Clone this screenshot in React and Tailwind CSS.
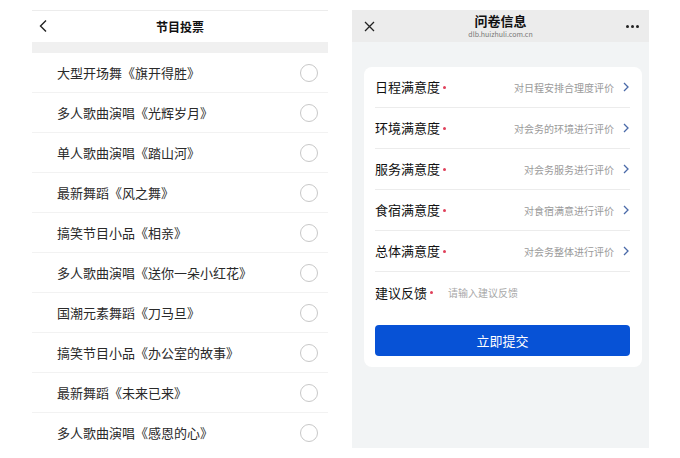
const programs = [
  "大型开场舞《旗开得胜》",
  "多人歌曲演唱《光辉岁月》",
  "单人歌曲演唱《踏山河》",
  "最新舞蹈《风之舞》",
  "搞笑节目小品《相亲》",
  "多人歌曲演唱《送你一朵小红花》",
  "国潮元素舞蹈《刀马旦》",
  "搞笑节目小品《办公室的故事》",
  "最新舞蹈《未来已来》",
  "多人歌曲演唱《感恩的心》",
];

const questions = [
  { label: "日程满意度", hint: "对日程安排合理度评价" },
  { label: "环境满意度", hint: "对会务的环境进行评价" },
  { label: "服务满意度", hint: "对会务服务进行评价" },
  { label: "食宿满意度", hint: "对食宿满意进行评价" },
  { label: "总体满意度", hint: "对会务整体进行评价" },
];

const VotePage = () => {
  return (
    <div className="w-[296px] h-[438px] flex flex-col overflow-hidden bg-white border-t border-[#ececec]">
      <div className="relative h-[31px] flex items-center justify-center shrink-0">
        <svg className="absolute left-[6px] top-[8px]" width="12" height="14" viewBox="0 0 12 14">
          <path d="M8 1.5 L2.5 7 L8 12.5" fill="none" stroke="#222" strokeWidth="1.4" />
        </svg>
        <span className="text-[12px] font-bold text-[#111]">节目投票</span>
      </div>
      <div className="h-[11px] bg-[#f0f0f0] shrink-0" />
      <ul>
        {programs.map((p) => (
          <li
            key={p}
            className="h-[40px] flex items-center justify-between pl-[25px] pr-[10px] border-b border-[#f2f2f2]"
          >
            <span className="text-[13px] text-[#2a2a2a]">{p}</span>
            <span className="w-[18px] h-[18px] rounded-full border border-[#c8c8c8]" />
          </li>
        ))}
      </ul>
    </div>
  );
};

const Chevron = () => (
  <svg width="8" height="10" viewBox="0 0 8 10" className="ml-[8px]">
    <path d="M2 1 L6 5 L2 9" fill="none" stroke="#4a6aa8" strokeWidth="1.3" />
  </svg>
);

const SurveyPage = () => {
  return (
    <div className="w-[297px] h-[438px] flex flex-col bg-[#f2f4f5]">
      <div className="relative h-[32px] bg-[#ececec] flex flex-col items-center justify-center shrink-0">
        <svg className="absolute left-[12px] top-[11px]" width="11" height="11" viewBox="0 0 11 11">
          <path d="M1 1 L10 10 M10 1 L1 10" stroke="#222" strokeWidth="1.3" />
        </svg>
        <span className="text-[13px] font-semibold text-[#111] leading-[14px]">问卷信息</span>
        <span className="mt-[2px] text-[7px] text-[#777] leading-[8px]">dlb.huizhuli.com.cn</span>
        <div className="absolute right-[10px] top-[15px] flex gap-[2px]">
          <span className="w-[3px] h-[3px] rounded-full bg-[#222]" />
          <span className="w-[3px] h-[3px] rounded-full bg-[#222]" />
          <span className="w-[3px] h-[3px] rounded-full bg-[#222]" />
        </div>
      </div>
      <div className="pl-[12px] pr-[7px] pt-[25px]">
        <div className="bg-white rounded-lg pl-[11px] pr-[12px] pb-[11px]">
          {questions.map((q) => (
            <div key={q.label} className="h-[41px] flex items-center justify-between border-b border-[#ececec]">
              <div className="flex items-center">
                <span className="text-[13px] text-[#111]">{q.label}</span>
                <span className="ml-[3px] w-[3px] h-[3px] rounded-full bg-[#e0405a]" />
              </div>
              <div className="flex items-center">
                <span className="text-[10px] text-[#9a9a9a]">{q.hint}</span>
                <Chevron />
              </div>
            </div>
          ))}
          <div className="h-[41px] flex items-center">
            <span className="text-[13px] text-[#111]">建议反馈</span>
            <span className="ml-[3px] w-[3px] h-[3px] rounded-full bg-[#e0405a]" />
            <span className="ml-[15px] text-[10px] text-[#a8a8a8]">请输入建议反馈</span>
          </div>
          <button className="mt-[12px] w-full h-[31px] rounded-[4px] bg-[#0752d6] text-white text-[13px]">
            立即提交
          </button>
        </div>
      </div>
    </div>
  );
};

export default function App() {
  return (
    <div
      className="w-[680px] h-[458px] bg-white flex gap-[24px] pl-[32px] pt-[10px] overflow-hidden"
      style={{ fontFamily: '"Noto Sans CJK SC", "Noto Sans", sans-serif' }}
    >
      <VotePage />
      <SurveyPage />
    </div>
  );
}
